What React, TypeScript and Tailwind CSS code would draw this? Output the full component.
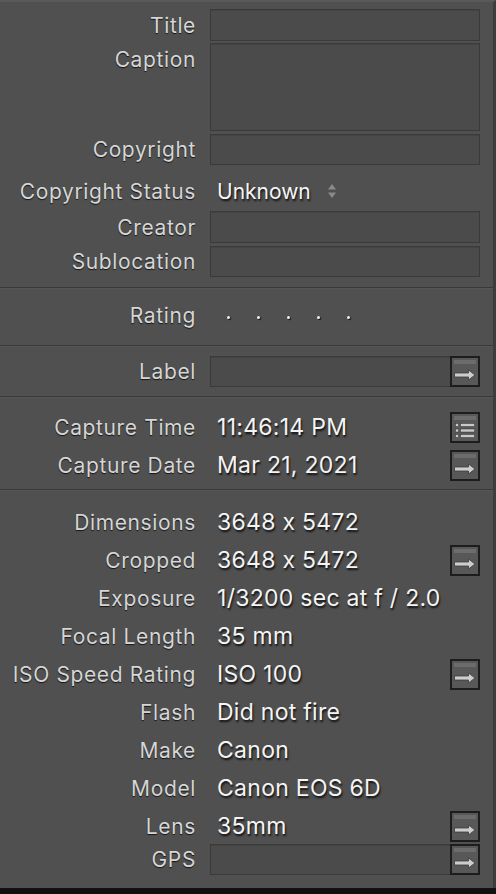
import React from 'react';

const labelCls =
  'text-right text-[21px] leading-none tracking-[0.03em] text-[#d6d6d6] [text-shadow:0_1px_1px_rgba(0,0,0,0.75)] whitespace-nowrap';
const valueCls =
  'text-[23px] leading-none tracking-[0.012em] text-[#f4f4f4] [text-shadow:1px_2px_2px_rgba(0,0,0,0.8)] whitespace-nowrap';

function Field({h, button}: {h: number; button?: boolean}) {
  return (
    <div
      className="flex w-[270px] border border-[#3a3a3a] bg-[#4b4b4b] shadow-[inset_0_1px_0_#444]"
      style={{height: h}}
    >
      <div className="flex-1" />
      {button && <ArrowButton flush />}
    </div>
  );
}

function ArrowButton({flush}: {flush?: boolean}) {
  return (
    <div
      className={
        'flex h-[31px] w-[30px] shrink-0 flex-col border-2 border-[#1d1d1d] bg-[#585858] ' +
        (flush ? '-my-px -mr-px' : '')
      }
    >
      <div className="mx-[2px] mt-[2px] h-[4px] bg-[#6c6c6c]" />
      <svg viewBox="0 0 26 21" className="h-[21px] w-[26px]">
        <path
          d="M2.5 9 H16.5 V6 L23 11 L16.5 16 V13 H2.5 Z"
          fill="#cdcdcd"
          stroke="#3a3a3a"
          strokeWidth="0.8"
          strokeLinejoin="round"
        />
      </svg>
    </div>
  );
}

function ListButton() {
  return (
    <div className="flex h-[31px] w-[30px] shrink-0 flex-col border-2 border-[#1d1d1d] bg-[#585858]">
      <div className="mx-[2px] mt-[2px] h-[4px] bg-[#6c6c6c]" />
      <svg viewBox="0 0 26 21" className="h-[21px] w-[26px]">
        {[3.5, 9, 14.5].map((y) => (
          <g key={y}>
            <rect x="3.5" y={y} width="3" height="3" fill="#c9c9c9" stroke="#333" strokeWidth="0.5" />
            <rect x="8.5" y={y} width="14" height="3" fill="#c9c9c9" stroke="#333" strokeWidth="0.5" />
          </g>
        ))}
      </svg>
    </div>
  );
}

function Separator() {
  return <div className="h-[2px] border-t border-[#393939] bg-[#565656]" />;
}

function Row({
  label,
  h,
  children,
  top,
}: {
  label: string;
  h: number;
  children?: React.ReactNode;
  top?: number;
}) {
  return (
    <div className="grid grid-cols-[196px_270px] gap-x-[14px]" style={{height: h}}>
      <div
        className={'flex justify-end ' + (top === undefined ? 'items-center' : 'items-start')}
        style={top === undefined ? undefined : {paddingTop: top}}
      >
        <span className={labelCls}>{label}</span>
      </div>
      <div className="flex items-center">{children}</div>
    </div>
  );
}

function ValueRow({label, value, button}: {label: string; value: string; button?: 'arrow' | 'list'}) {
  return (
    <Row label={label} h={38}>
      <div className="flex w-full items-center justify-between pl-[7px]">
        <span className={valueCls}>{value}</span>
        {button === 'arrow' && <ArrowButton />}
        {button === 'list' && <ListButton />}
      </div>
    </Row>
  );
}

export default function App() {
  return (
    <div className="h-[894px] w-[496px] overflow-hidden bg-[#505050] font-['Inter','Liberation_Sans',sans-serif] [font-feature-settings:'calt'_0]">
      <div className="flex h-[888px] flex-col border-t-2 border-r-[3px] border-t-[#5a5a5a] border-r-[#3d3d3d]">
        {/* description */}
        <div className="flex flex-col pt-[7px]">
          <Row label="Title" h={32}>
            <Field h={32} />
          </Row>
          <div className="mt-[2px]">
            <Row label="Caption" h={88} top={6}>
              <Field h={88} />
            </Row>
          </div>
          <div className="mt-[3px]">
            <Row label="Copyright" h={31}>
              <Field h={31} />
            </Row>
          </div>
          <div className="mt-[6px]">
            <Row label="Copyright Status" h={40}>
              <div className="flex items-center gap-[16px] pl-[7px]">
                <span className={valueCls + ' !text-[21px] !tracking-normal'}>Unknown</span>
                <svg viewBox="0 0 10 16" className="h-[16px] w-[10px]">
                  <path d="M5 1 L9 6.5 H1 Z" fill="#8a8a8a" />
                  <path d="M5 15 L9 9.5 H1 Z" fill="#8a8a8a" />
                </svg>
              </div>
            </Row>
          </div>
          <Row label="Creator" h={32}>
            <Field h={32} />
          </Row>
          <div className="mt-[3px]">
            <Row label="Sublocation" h={31}>
              <Field h={31} />
            </Row>
          </div>
        </div>
        <div className="h-[10px]" />
        <Separator />
        {/* rating */}
        <div className="h-[56px]">
          <Row label="Rating" h={52}>
            <div className="flex items-center gap-[27px] pl-[17px] pt-[4px]">
              {[0, 1, 2, 3, 4].map((i) => (
                <span
                  key={i}
                  className="h-[3px] w-[3px] rounded-full bg-[#f0f0f0] shadow-[1px_1px_1px_rgba(0,0,0,0.8)]"
                />
              ))}
            </div>
          </Row>
        </div>
        <Separator />
        {/* label */}
        <div className="flex h-[49px] items-center">
          <Row label="Label" h={31}>
            <Field h={31} button />
          </Row>
        </div>
        <Separator />
        {/* capture */}
        <div className="flex h-[91px] flex-col pt-[10px]">
          <ValueRow label="Capture Time" value="11:46:14 PM" button="list" />
          <ValueRow label="Capture Date" value="Mar 21, 2021" button="arrow" />
        </div>
        <Separator />
        {/* exif */}
        <div className="flex flex-col pt-[12px]">
          <ValueRow label="Dimensions" value="3648 x 5472" />
          <ValueRow label="Cropped" value="3648 x 5472" button="arrow" />
          <ValueRow label="Exposure" value="1/3200 sec at f / 2.0" />
          <ValueRow label="Focal Length" value="35 mm" />
          <ValueRow label="ISO Speed Rating" value="ISO 100" button="arrow" />
          <ValueRow label="Flash" value="Did not fire" />
          <ValueRow label="Make" value="Canon" />
          <ValueRow label="Model" value="Canon EOS 6D" />
          <ValueRow label="Lens" value="35mm" button="arrow" />
          <div className="-mt-[1px]">
            <Row label="GPS" h={31}>
              <Field h={31} button />
            </Row>
          </div>
        </div>
      </div>
      <div className="h-[6px] bg-[#111111]" />
    </div>
  );
}
